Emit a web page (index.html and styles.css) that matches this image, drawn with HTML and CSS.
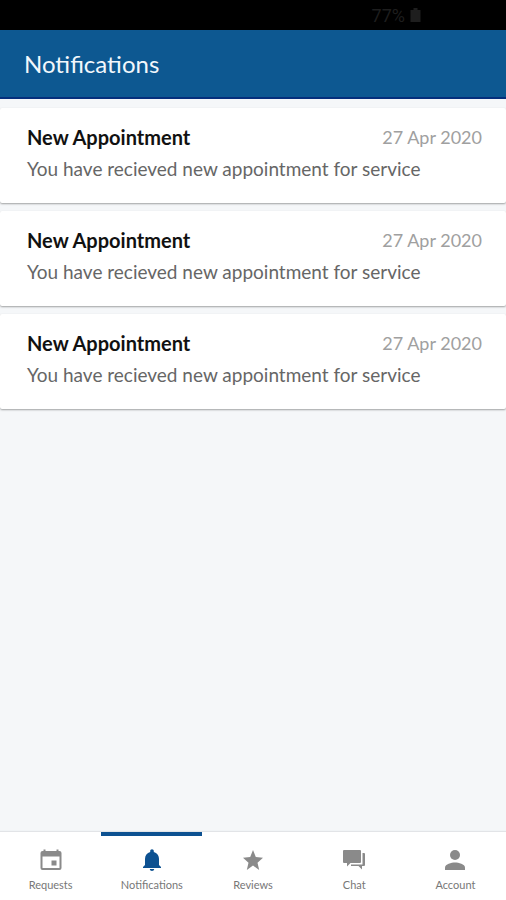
FILE: index.html
```html
<!DOCTYPE html>
<html lang="en">
<head>
  <meta charset="utf-8">
  <meta name="viewport" content="width=device-width, initial-scale=1">
  <title>Notifications</title>
  <link rel="stylesheet" href="styles.css">
</head>
<body>
  <div class="status-bar">
    <span>77%</span>
    <svg class="battery" viewBox="0 0 10 14" aria-hidden="true">
      <path d="M3 0h4v2h3v12H0V2h3z"/>
    </svg>
  </div>

  <header class="app-bar">
    <h1>Notifications</h1>
  </header>

  <main class="list">
    <article class="card">
      <div class="card-head">
        <h2>New Appointment</h2>
        <time datetime="2020-04-27">27 Apr 2020</time>
      </div>
      <p>You have recieved new appointment for service</p>
    </article>
    <article class="card">
      <div class="card-head">
        <h2>New Appointment</h2>
        <time datetime="2020-04-27">27 Apr 2020</time>
      </div>
      <p>You have recieved new appointment for service</p>
    </article>
    <article class="card">
      <div class="card-head">
        <h2>New Appointment</h2>
        <time datetime="2020-04-27">27 Apr 2020</time>
      </div>
      <p>You have recieved new appointment for service</p>
    </article>
  </main>

  <nav class="tabs">
    <a class="tab" href="#requests">
      <svg viewBox="0 0 24 24" aria-hidden="true">
        <path fill-rule="evenodd" d="M4.500 1.500h2V3h11V1.500h2V3h1a2 2 0 0 1 2 2v15a2 2 0 0 1-2 2h-17a2 2 0 0 1-2-2V5a2 2 0 0 1 2-2h1zM3.500 8.500v11.500h17V8.500zM12.500 12.500h5v5h-5z"/>
      </svg>
      <span>Requests</span>
    </a>
    <a class="tab active" href="#notifications">
      <svg viewBox="0 0 24 24" aria-hidden="true">
        <path d="M12 23c1.200 0 2.200-.9 2.200-2H9.800c0 1.100 1 2 2.200 2zM19 17v-6c0-3.600-2-6.300-5.200-7.100V3c0-1-.8-1.800-1.800-1.800s-1.800.8-1.800 1.800v.9C7 4.700 5 7.400 5 11v6l-2 2v1h18v-1z"/>
      </svg>
      <span>Notifications</span>
    </a>
    <a class="tab" href="#reviews">
      <svg viewBox="0 0 24 24" aria-hidden="true">
        <path d="M12 17.500 18.200 22l-1.700-7.300L22 9.700l-7.200-.6L12 2 9.200 9.100 2 9.700l5.500 5L5.800 22z"/>
      </svg>
      <span>Reviews</span>
    </a>
    <a class="tab" href="#chat">
      <svg viewBox="0 0 24 24" aria-hidden="true">
        <path d="M2 2h16a1 1 0 0 1 1 1v11a1 1 0 0 1-1 1H8.500L5 18.500V15H2a1 1 0 0 1-1-1V3a1 1 0 0 1 1-1z"/>
        <path d="M20.500 5H22a1 1 0 0 1 1 1v11a1 1 0 0 1-1 1h-2v3.500L16.500 18H9v-1.500h11.500z"/>
      </svg>
      <span>Chat</span>
    </a>
    <a class="tab" href="#account">
      <svg viewBox="0 0 24 24" aria-hidden="true">
        <circle cx="12" cy="7" r="5"/>
        <path d="M12 14.500c-3.500 0-10 1.700-10 5V22h20v-2.500c0-3.300-6.500-5-10-5z"/>
      </svg>
      <span>Account</span>
    </a>
  </nav>
</body>
</html>
```
FILE: styles.css
```css
* {
  box-sizing: border-box;
}

body {
  margin: 0;
  min-height: 100vh;
  display: flex;
  flex-direction: column;
  background-color: #f5f7f9;
  font-family: Lato, "Liberation Sans", sans-serif;
}

h1, h2, p {
  margin: 0;
  font-weight: normal;
}

.status-bar {
  display: flex;
  justify-content: flex-end;
  align-items: center;
  gap: 5px;
  height: 30px;
  padding-right: 85px;
  background-color: #000;
  color: #1e1e1e;
  font-family: Roboto, sans-serif;
  font-size: 18px;
}

.battery {
  width: 11px;
  height: 14px;
  fill: #1e1e1e;
}

.app-bar {
  display: flex;
  align-items: center;
  height: 69px;
  padding: 0 24px;
  background-color: #0d5891;
  border-bottom: 2px solid #052f7c;
  color: #f2f7fc;
}

h1 {
  font-size: 24px;
  line-height: 32px;
}

.list {
  flex: 1;
  display: flex;
  flex-direction: column;
  gap: 8px;
  padding-top: 9px;
}

.card {
  padding: 17px 24px 22px 27px;
  background-color: #fff;
  border-radius: 2px;
  box-shadow: 0 1px 2px rgba(0, 0, 0, 0.35);
}

.card-head {
  display: flex;
  justify-content: space-between;
  align-items: center;
  margin-bottom: 8px;
  line-height: 24px;
}

h2 {
  font-size: 20px;
  font-weight: bold;
  color: #111;
}

time {
  font-size: 18px;
  color: #a0a0a0;
}

.card p {
  font-size: 19px;
  line-height: 24px;
  color: #666;
}

.tabs {
  display: flex;
  height: 68px;
  background-color: #fff;
  box-shadow: 0 -1px 1px #e2e4e7;
}

.tab {
  flex: 1;
  display: flex;
  flex-direction: column;
  align-items: center;
  gap: 5px;
  padding-top: 12px;
  border-top: 4px solid transparent;
  color: #777;
  font-size: 11px;
  line-height: 16px;
  text-decoration: none;
}

.tab svg {
  width: 24px;
  height: 24px;
  fill: #8a8a8a;
}

.tab.active {
  border-top-color: #0d5191;
}

.tab.active svg {
  fill: #0d5191;
}
```
